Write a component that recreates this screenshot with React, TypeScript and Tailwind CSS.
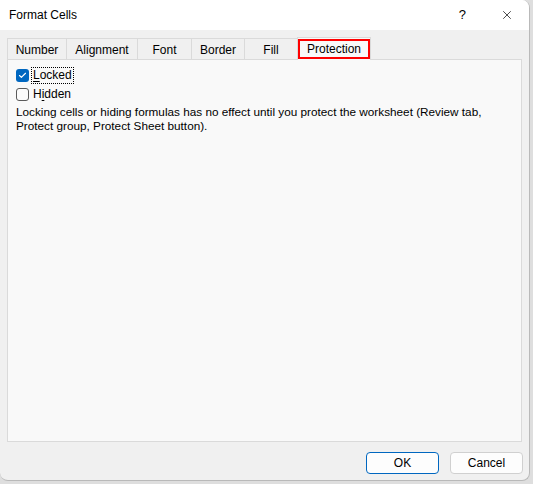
import { Check, X } from "lucide-react";

const tabs = [
  { label: "Number", w: "w-[59px]" },
  { label: "Alignment", w: "w-[71px]" },
  { label: "Font", w: "w-[54px]" },
  { label: "Border", w: "w-[53px]" },
  { label: "Fill", w: "w-[53px]" },
];

function CheckRow({ checked, children, focused }: { checked?: boolean; children: React.ReactNode; focused?: boolean }) {
  return (
    <div className="flex h-[19px] items-center">
      <span
        className={
          "flex h-[13px] w-[13px] items-center justify-center rounded-[3px] " +
          (checked ? "bg-[#0067c0]" : "border border-[#5a5a5a] bg-[#fbfbfb]")
        }
      >
        {checked && <Check className="h-[9px] w-[9px] text-white" strokeWidth={3} />}
      </span>
      <span
        className={
          "ml-[3px] px-[1px] leading-[15px] " + (focused ? "outline outline-1 outline-dotted outline-black" : "")
        }
      >
        {children}
      </span>
    </div>
  );
}

export default function App() {
  return (
    <div
      className="h-[484px] w-[533px] overflow-hidden bg-[#dedede] text-[12px] text-black"
      style={{ fontFamily: '"Segoe UI", "Liberation Sans", Arial, sans-serif' }}
    >
      <div className="flex h-[481px] w-[530px] flex-col overflow-hidden rounded-b-[8px] rounded-tr-[8px] border-r border-b border-[#b9b9b9] bg-[#f0f0f0]">
        {/* title bar */}
        <div className="flex h-[30px] shrink-0 items-center bg-white pl-[9px]">
          <span>Format Cells</span>
          <span className="ml-auto mr-[34px] text-[13px]">?</span>
          <X className="mr-[15px] h-[14px] w-[14px]" strokeWidth={1.2} />
        </div>

        {/* tabs */}
        <div className="mt-[7px] flex h-[22px] items-end pl-[7px]">
          {tabs.map((t) => (
            <div
              key={t.label}
              className={
                "flex h-[21px] items-center justify-center border-t border-l border-[#dadada] bg-[#f0f0f0] pt-[1px] " +
                t.w
              }
            >
              {t.label}
            </div>
          ))}
          <div className="relative z-10 -mb-px h-[23px] w-[74px] border-x border-t border-[#dadada] bg-[#f9f9f9] pt-[1px]">
            <span className="flex h-[20px] w-[72px] items-center justify-center border-2 border-[#ff0000]">
              Protection
            </span>
          </div>
        </div>

        {/* panel */}
        <div className="ml-[7px] mr-[7px] h-[383px] border border-[#dadada] bg-[#f9f9f9] px-[8px] pt-[6px]">
          <CheckRow checked focused>
            <span className="underline underline-offset-2">L</span>ocked
          </CheckRow>
          <CheckRow>
            H<span className="underline underline-offset-2">i</span>dden
          </CheckRow>
          <p className="mt-[1px] text-[11.75px] leading-[13.5px]">
            Locking cells or hiding formulas has no effect until you protect the worksheet (Review tab,
            <br />
            Protect group, Protect Sheet button).
          </p>
        </div>

        {/* buttons */}
        <div className="mt-[10px] flex justify-end gap-[11px] pr-[6px]">
          <button className="h-[22px] w-[73px] rounded-[4px] border border-[#0067c0] bg-[#fdfdfd]">OK</button>
          <button className="h-[22px] w-[73px] rounded-[4px] border border-[#d0d0d0] bg-[#fdfdfd]">Cancel</button>
        </div>
      </div>
    </div>
  );
}
